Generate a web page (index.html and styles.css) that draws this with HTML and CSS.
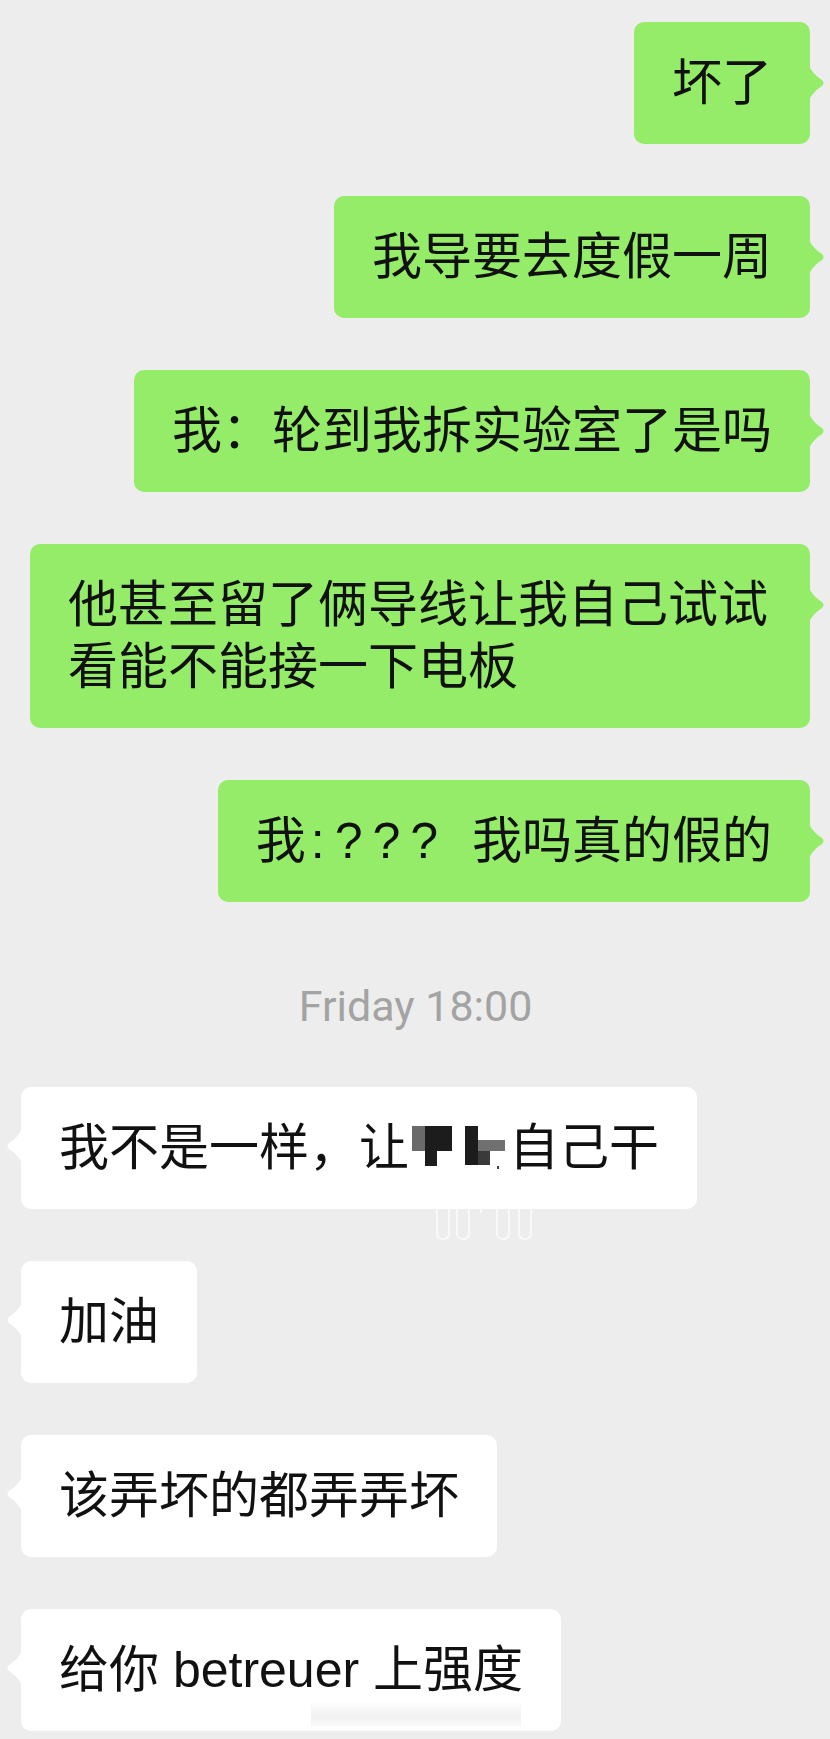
FILE: index.html
```html
<!DOCTYPE html>
<html lang="zh">
<head>
  <meta charset="UTF-8">
  <meta name="viewport" content="width=device-width, initial-scale=1.0">
  <title>聊天记录</title>
  <link rel="stylesheet" href="styles.css">
</head>
<body>
  <div class="chat">
    <div class="row me">
      <div class="bubble">坏了<svg class="tail" viewBox="0 0 16 36"><path d="M0 0C2 6 6 10 13 15Q16 18 13 21C6 26 2 30 0 36Z"/></svg></div>
    </div>
    <div class="row me">
      <div class="bubble">我导要去度假一周<svg class="tail" viewBox="0 0 16 36"><path d="M0 0C2 6 6 10 13 15Q16 18 13 21C6 26 2 30 0 36Z"/></svg></div>
    </div>
    <div class="row me">
      <div class="bubble">我：轮到我拆实验室了是吗<svg class="tail" viewBox="0 0 16 36"><path d="M0 0C2 6 6 10 13 15Q16 18 13 21C6 26 2 30 0 36Z"/></svg></div>
    </div>
    <div class="row me">
      <div class="bubble">他甚至留了俩导线让我自己试试看能不能接一下电板<svg class="tail" viewBox="0 0 16 36"><path d="M0 0C2 6 6 10 13 15Q16 18 13 21C6 26 2 30 0 36Z"/></svg></div>
    </div>
    <div class="row me">
      <div class="bubble">我<span class="qs">:??? </span>我吗真的假的<svg class="tail" viewBox="0 0 16 36"><path d="M0 0C2 6 6 10 13 15Q16 18 13 21C6 26 2 30 0 36Z"/></svg></div>
    </div>

    <div class="time">Friday 18:00</div>

    <div class="row them">
      <div class="bubble">我不是一样，让<svg class="mosaic" viewBox="0 0 100 62">
          <rect x="3" y="9" width="13" height="25" fill="#6a6a6a"/>
          <rect x="16" y="9" width="27" height="25" fill="#1c1c1c"/>
          <rect x="16" y="34" width="12" height="15" fill="#1c1c1c"/>
          <rect x="56" y="9" width="13" height="39" fill="#1c1c1c"/>
          <rect x="69" y="23" width="27" height="11" fill="#707070"/>
          <rect x="69" y="34" width="12" height="14" fill="#3a3a3a"/>
          <rect x="88" y="49" width="2" height="3" fill="#444"/>
        </svg>自己干<svg class="tail" viewBox="0 0 16 36"><path d="M16 0C14 6 10 10 3 15Q0 18 3 21C10 26 14 30 16 36Z"/></svg>
        <svg class="smudge" viewBox="0 0 110 40"><path d="M6 4V30Q6 36 12 36Q18 36 18 30V4M26 4V30Q26 36 32 36Q38 36 38 30V4M50 4V10M66 4V30Q66 36 72 36Q78 36 78 30V4M88 4V30Q88 36 94 36Q100 36 100 30V4"/></svg>
      </div>
    </div>
    <div class="row them">
      <div class="bubble">加油<svg class="tail" viewBox="0 0 16 36"><path d="M16 0C14 6 10 10 3 15Q0 18 3 21C10 26 14 30 16 36Z"/></svg></div>
    </div>
    <div class="row them">
      <div class="bubble">该弄坏的都弄弄坏<svg class="tail" viewBox="0 0 16 36"><path d="M16 0C14 6 10 10 3 15Q0 18 3 21C10 26 14 30 16 36Z"/></svg></div>
    </div>
    <div class="row them">
      <div class="bubble">给你 betreuer 上强度<svg class="tail" viewBox="0 0 16 36"><path d="M16 0C14 6 10 10 3 15Q0 18 3 21C10 26 14 30 16 36Z"/></svg>
        <div class="blur"></div>
      </div>
    </div>
  </div>
</body>
</html>
```

FILE: styles.css
```css
body {
  margin: 0;
  background-color: #ededed;
  font-family: "Liberation Sans", "Noto Sans CJK SC", sans-serif;
}
.chat {
  display: flex;
  flex-direction: column;
  gap: 52px;
  padding: 22px 20px 6px 21px;
}
.row {
  display: flex;
}
.row.me {
  justify-content: flex-end;
}
.row.them {
  justify-content: flex-start;
}
.bubble {
  position: relative;
  box-sizing: border-box;
  max-width: 780px;
  padding: 30px 38px;
  border-radius: 10px;
  font-size: 50px;
  line-height: 62px;
  color: #111;
}
.me .bubble {
  background-color: #95ec69;
}
.them .bubble {
  background-color: #ffffff;
}
.tail {
  position: absolute;
  top: 43px;
  width: 16px;
  height: 36px;
}
.me .tail {
  right: -15px;
  fill: #95ec69;
}
.them .tail {
  top: 41px;
  left: -15px;
  fill: #ffffff;
}
.qs {
  padding-left: 5px;
  letter-spacing: 10px;
}
.mosaic {
  display: inline-block;
  width: 100px;
  height: 62px;
  vertical-align: top;
}
.time {
  margin: 27px 0 4px;
  text-align: center;
  font-family: Roboto, "Liberation Sans", sans-serif;
  font-size: 43px;
  line-height: 50px;
  color: #a3a3a3;
}
/* leftovers of the pixelated redaction */
.smudge {
  position: absolute;
  left: 410px;
  top: 116px;
  width: 110px;
  height: 40px;
  fill: none;
  stroke: #ffffff;
  stroke-width: 2;
  opacity: 0.7;
}
.blur {
  position: absolute;
  left: 290px;
  bottom: 4px;
  width: 210px;
  height: 26px;
  background: linear-gradient(to bottom, rgba(220, 220, 220, 0) 0%, rgba(215, 215, 215, 0.35) 60%, rgba(230, 230, 230, 0.15) 100%);
}
```
